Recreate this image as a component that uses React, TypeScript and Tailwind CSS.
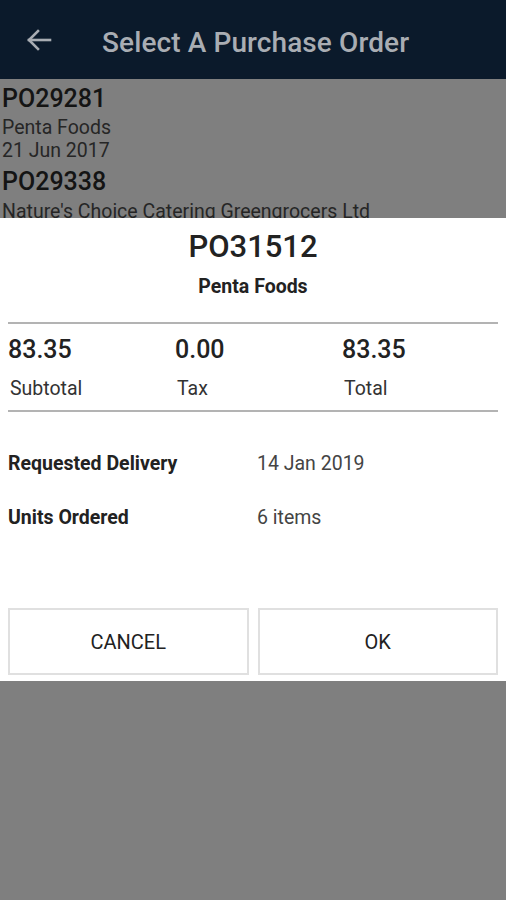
const totals = [
  { value: "83.35", label: "Subtotal" },
  { value: "0.00", label: "Tax" },
  { value: "83.35", label: "Total" },
];

const details = [
  { label: "Requested Delivery", value: "14 Jan 2019" },
  { label: "Units Ordered", value: "6 items" },
];

export default function App() {
  return (
    <div className="w-[506px] h-[900px] bg-[#7f7f7f] flex flex-col overflow-hidden font-['Roboto',sans-serif]">
      {/* Toolbar (dimmed by the dialog scrim) */}
      <div className="h-[79px] shrink-0 bg-[#0b1a2b] flex items-center">
        <svg
          className="ml-[27px] w-[25px] h-[22px] text-[#a9adb3]"
          viewBox="0 0 25 22"
          fill="none"
          stroke="currentColor"
          strokeWidth="2.6"
          strokeLinecap="square"
        >
          <path d="M2 11H23" />
          <path d="M11 2L2 11L11 20" />
        </svg>
        <h1 className="ml-[50px] mt-[6px] text-[28px] font-medium text-[#a9adb3] leading-none tracking-[0.1px]">
          Select A Purchase Order
        </h1>
      </div>

      {/* Order list behind the dialog */}
      <div className="h-[139px] shrink-0 overflow-hidden px-[2px] pt-[6px] text-[#141414]">
        <p className="text-[25px] font-medium leading-[28px]">PO29281</p>
        <p className="mt-[3px] text-[19.5px] leading-[23px] text-[#262626]">Penta Foods</p>
        <p className="text-[19.5px] leading-[23px] text-[#262626]">21 Jun 2017</p>
        <p className="mt-[6px] text-[25px] font-medium leading-[28px]">PO29338</p>
        <p className="mt-[4px] text-[19.5px] leading-[23px] text-[#262626] whitespace-nowrap">
          Nature's Choice Catering Greengrocers Ltd
        </p>
      </div>

      {/* Dialog */}
      <div className="h-[463px] shrink-0 bg-white pt-[12px] text-[#222]">
        <p className="text-center text-[31px] font-medium leading-[34px]">PO31512</p>
        <p className="mt-[12px] text-center text-[19.5px] font-bold leading-[22px]">Penta Foods</p>

        <div className="mx-[8px] mt-[24px] border-t-2 border-[#b3b3b3]" />
        <div className="mx-[8px] mt-[12px] grid grid-cols-[167px_167px_1fr]">
          {totals.map((t, i) => (
            <div key={i}>
              <p className="text-[25px] font-medium leading-[28px]">{t.value}</p>
              <p className="mt-[14px] ml-[2px] text-[19.5px] leading-[22px] text-[#333]">{t.label}</p>
            </div>
          ))}
        </div>
        <div className="mx-[8px] mt-[10px] border-t-2 border-[#b3b3b3]" />

        <div className="mx-[8px] mt-[41px] flex flex-col gap-[32px]">
          {details.map((d) => (
            <div key={d.label} className="flex text-[19.5px] leading-[22px]">
              <span className="w-[249px] font-bold">{d.label}</span>
              <span className="text-[#444]">{d.value}</span>
            </div>
          ))}
        </div>

        <div className="mx-[8px] mt-[79px] flex gap-[9px]">
          <button className="h-[67px] flex-1 border-2 border-[#e0e0e0] bg-white text-[20px] text-[#222]">
            CANCEL
          </button>
          <button className="h-[67px] flex-1 border-2 border-[#e0e0e0] bg-white text-[20px] text-[#222]">
            OK
          </button>
        </div>
      </div>
    </div>
  );
}
